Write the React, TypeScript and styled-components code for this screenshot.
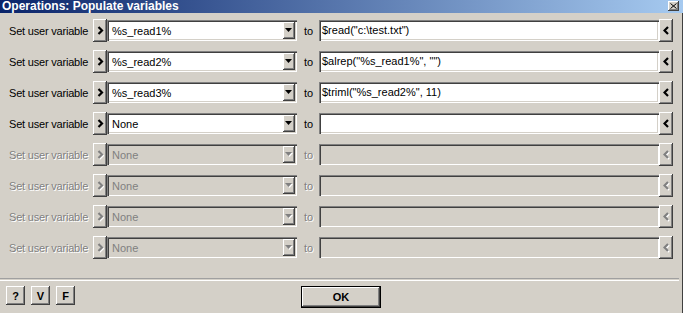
import React from "react";
import styled, { createGlobalStyle, css } from "styled-components";

type VarRow = {
    name: string,
    value: string,
    enabled: boolean
}

const rows: VarRow[] = [
    { name: "%s_read1%", value: '$read("c:\\test.txt")', enabled: true },
    { name: "%s_read2%", value: '$alrep("%s_read1%", "")', enabled: true },
    { name: "%s_read3%", value: '$triml("%s_read2%", 11)', enabled: true },
    { name: "None", value: "", enabled: true },
    { name: "None", value: "", enabled: false },
    { name: "None", value: "", enabled: false },
    { name: "None", value: "", enabled: false },
    { name: "None", value: "", enabled: false },
]

const Chevron = ({ dir, enabled }: { dir: "left" | "right", enabled: boolean }) => {
    const d = dir === "right" ? "M1.5 1 L5 4.5 L1.5 8" : "M5 1 L1.5 4.5 L5 8"
    return (
        <svg width="7" height="10" viewBox="0 0 7 10">
            {!enabled && <path d={d} transform="translate(1,1)" stroke="#ffffff" strokeWidth="2" fill="none" />}
            <path d={d} stroke={enabled ? "#000" : "#808080"} strokeWidth="2.2" fill="none" />
        </svg>
    )
}

const Triangle = ({ enabled }: { enabled: boolean }) => (
    <svg width="8" height="5" viewBox="0 0 8 5">
        {!enabled && <polygon points="1,1 8,1 4.5,5" fill="#fff" />}
        <polygon points="0,0 7,0 3.5,4" fill={enabled ? "#000" : "#808080"} />
    </svg>
)

const App = () => {
    return (
        <>
            <GlobalStyle />
            <Window>
                <TitleBar>
                    <Title>Operations: Populate variables</Title>
                    <CloseBox>
                        <svg width="7" height="6" viewBox="0 0 7 6">
                            <path d="M0.5 0.5 L6.5 5.5 M6.5 0.5 L0.5 5.5" stroke="#000" strokeWidth="1" fill="none" />
                        </svg>
                    </CloseBox>
                </TitleBar>
                <Body>
                    {rows.map((row, i) => (
                        <Row key={i}>
                            <Label enabled={row.enabled}>Set user variable</Label>
                            <Nudge>
                                <Chevron dir="right" enabled={row.enabled} />
                            </Nudge>
                            <Combo enabled={row.enabled}>
                                <ComboText enabled={row.enabled}>{row.name}</ComboText>
                                <DropBtn>
                                    <Triangle enabled={row.enabled} />
                                </DropBtn>
                            </Combo>
                            <ToLabel enabled={row.enabled}>to</ToLabel>
                            <ValueField enabled={row.enabled}>{row.value}</ValueField>
                            <Nudge>
                                <Chevron dir="left" enabled={row.enabled} />
                            </Nudge>
                        </Row>
                    ))}
                    <Separator />
                    <Footer>
                        <Tools>
                            <ToolBtn>?</ToolBtn>
                            <ToolBtn>V</ToolBtn>
                            <ToolBtn>F</ToolBtn>
                        </Tools>
                        <OkBtn>OK</OkBtn>
                    </Footer>
                </Body>
            </Window>
        </>
    )
}

export default App;

const GlobalStyle = createGlobalStyle`
    html, body {
        margin: 0;
        padding: 0;
        background: #D4D0C8;
    }
    body {
        font-family: "Liberation Sans", Arial, sans-serif;
        font-size: 11px;
    }
`

const raised = css`
    background: #D4D0C8;
    box-shadow: inset -1px -1px #404040, inset 1px 1px #ffffff, inset -2px -2px #808080, inset 2px 2px #D4D0C8;
`

const sunken = css`
    box-shadow: inset 1px 1px #808080, inset 2px 2px #404040, inset -1px -1px #ffffff, inset -2px -2px #D4D0C8;
`

const disabledText = css`
    color: #808080;
    text-shadow: 1px 1px 0 #ffffff;
`

const Window = styled.div`
    width: 683px;
    height: 313px;
    background: #D4D0C8;
    display: flex;
    flex-direction: column;
    overflow: hidden;
`

const TitleBar = styled.div`
    height: 13px;
    display: flex;
    align-items: center;
    justify-content: space-between;
    padding: 0 4px 0 2px;
    background: linear-gradient(to right, #0A246A, #A6CAF0);
`

const Title = styled.span`
    color: #ffffff;
    font-weight: 700;
    font-size: 12px;
    line-height: 13px;
    white-space: nowrap;
`

const CloseBox = styled.div`
    ${raised};
    width: 11px;
    height: 10px;
    margin-top: -2px;
    display: flex;
    align-items: center;
    justify-content: center;
`

const Body = styled.div`
    flex: 1;
    display: flex;
    flex-direction: column;
    gap: 8px;
    padding: 6px 0 0 9px;
    border-right: 1px solid #404040;
`

const Row = styled.div`
    display: flex;
    align-items: center;
    height: 23px;
`

const Label = styled.span<{ enabled: boolean }>`
    width: 84px;
    letter-spacing: -0.2px;
    white-space: nowrap;
    color: #000;
    ${props => !props.enabled && disabledText};
`

const Nudge = styled.div`
    ${raised};
    width: 14px;
    height: 23px;
    display: flex;
    align-items: center;
    justify-content: center;
    flex-shrink: 0;
`

const Combo = styled.div<{ enabled: boolean }>`
    ${sunken};
    width: 190px;
    height: 21px;
    box-sizing: border-box;
    padding: 2px 2px 2px 5px;
    display: flex;
    align-items: center;
    background: ${props => props.enabled ? "#ffffff" : "#D4D0C8"};
`

const ComboText = styled.span<{ enabled: boolean }>`
    flex: 1;
    color: #000;
    ${props => !props.enabled && css`color: #808080;`};
`

const DropBtn = styled.div`
    ${raised};
    width: 12px;
    height: 17px;
    display: flex;
    align-items: center;
    justify-content: center;
`

const ToLabel = styled.span<{ enabled: boolean }>`
    width: 15px;
    margin-left: 7px;
    color: #000;
    ${props => !props.enabled && disabledText};
`

const ValueField = styled.div<{ enabled: boolean }>`
    ${sunken};
    width: 340px;
    height: 21px;
    box-sizing: border-box;
    padding: 0 3px;
    line-height: 21px;
    white-space: nowrap;
    background: ${props => props.enabled ? "#ffffff" : "#D4D0C8"};
`

const Separator = styled.div`
    height: 1px;
    margin: 11px 3px 0 -9px;
    border-top: 1px solid #A0A0A0;
    border-bottom: 1px solid #ffffff;
`

const Footer = styled.div`
    display: grid;
    grid-template-columns: 1fr auto 1fr;
    align-items: start;
    margin: -3px 0 0 -3px;
`

const Tools = styled.div`
    display: flex;
    gap: 6px;
`

const ToolBtn = styled.div`
    ${raised};
    width: 19px;
    height: 19px;
    display: flex;
    align-items: center;
    justify-content: center;
    font-weight: 700;
    font-size: 11px;
`

const OkBtn = styled.div`
    ${raised};
    width: 80px;
    height: 22px;
    box-sizing: border-box;
    border: 1px solid #000;
    display: flex;
    align-items: center;
    justify-content: center;
    font-weight: 700;
    font-size: 11px;
    margin-left: -6px;
`
